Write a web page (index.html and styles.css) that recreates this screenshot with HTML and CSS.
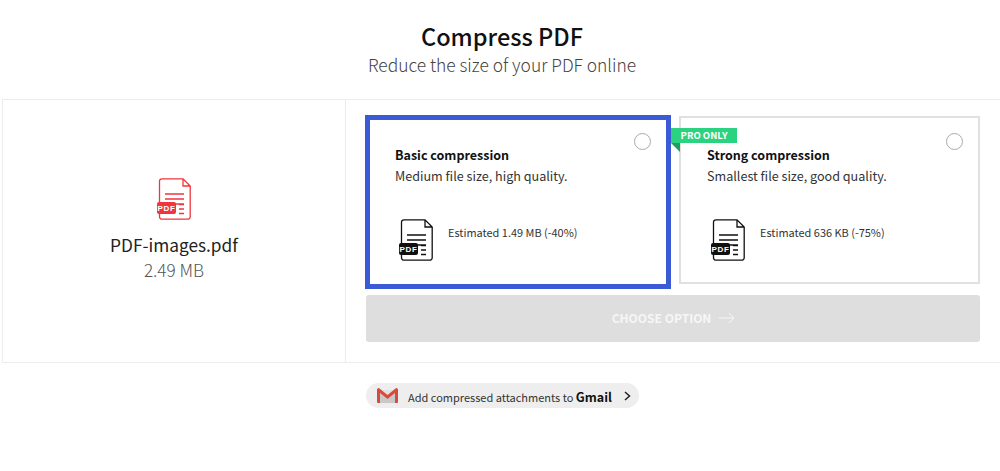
FILE: index.html
```html
<!DOCTYPE html>
<html lang="en">
<head>
    <meta charset="UTF-8">
    <title>Compress PDF</title>
    <link rel="stylesheet" href="styles.css">
</head>
<body>
    <header>
        <h1>Compress PDF</h1>
        <p>Reduce the size of your PDF online</p>
    </header>

    <div class="panel">
        <div class="fileCol">
            <svg class="fileIcon" viewBox="0 0 34 42">
                <path d="M5 .8h21L33.200 8V38.700a2.500 2.500 0 0 1-2.500 2.500H5a2.500 2.500 0 0 1-2.500-2.500V3.300A2.500 2.500 0 0 1 5 .8zM26 1V8h7" fill="#fff" stroke="currentColor" stroke-width="1.300"/>
                <path d="M8 16h19M8 21h19M8 26h19M22 26.500h5M22 31h5M22 35.500h5" fill="none" stroke="currentColor" stroke-width="1.300"/>
                <rect x="0" y="24" width="19" height="12" rx="2" fill="currentColor"/>
                <text x="9.500" y="33" class="pdfTag" text-anchor="middle">PDF</text>
            </svg>
            <div class="fileName">PDF-images.pdf</div>
            <div class="fileSize">2.49 MB</div>
        </div>
        <div class="optionsCol">
            <div class="options">
                <div class="card selected">
                    <span class="radio"></span>
                    <h3>Basic compression</h3>
                    <p>Medium file size, high quality.</p>
                    <div class="estimate">
                        <svg class="docIcon" viewBox="0 0 34 42">
                            <path d="M5 .8h21L33.200 8V38.700a2.500 2.500 0 0 1-2.500 2.500H5a2.500 2.500 0 0 1-2.500-2.500V3.300A2.500 2.500 0 0 1 5 .8zM26 1V8h7" fill="#fff" stroke="currentColor" stroke-width="1.300"/>
                            <path d="M8 16h19M8 21h19M8 26h19M22 26.500h5M22 31h5M22 35.500h5" fill="none" stroke="currentColor" stroke-width="1.300"/>
                            <rect x="0" y="24" width="19" height="12" rx="2" fill="currentColor"/>
                            <text x="9.500" y="33" class="pdfTag" text-anchor="middle">PDF</text>
                        </svg>
                        <span>Estimated 1.49 MB (-40%)</span>
                    </div>
                </div>
                <div class="card">
                    <span class="proBadge">PRO ONLY</span>
                    <span class="radio"></span>
                    <h3>Strong compression</h3>
                    <p>Smallest file size, good quality.</p>
                    <div class="estimate">
                        <svg class="docIcon" viewBox="0 0 34 42">
                            <path d="M5 .8h21L33.200 8V38.700a2.500 2.500 0 0 1-2.500 2.500H5a2.500 2.500 0 0 1-2.500-2.500V3.300A2.500 2.500 0 0 1 5 .8zM26 1V8h7" fill="#fff" stroke="currentColor" stroke-width="1.300"/>
                            <path d="M8 16h19M8 21h19M8 26h19M22 26.500h5M22 31h5M22 35.500h5" fill="none" stroke="currentColor" stroke-width="1.300"/>
                            <rect x="0" y="24" width="19" height="12" rx="2" fill="currentColor"/>
                            <text x="9.500" y="33" class="pdfTag" text-anchor="middle">PDF</text>
                        </svg>
                        <span>Estimated 636 KB (-75%)</span>
                    </div>
                </div>
            </div>
            <button class="chooseBtn">CHOOSE OPTION
                <svg width="16" height="12" viewBox="0 0 16 12"><path d="M0 6h15M10 1l5 5-5 5" fill="none" stroke="#f6f6f6" stroke-width="1"/></svg>
            </button>
        </div>
    </div>

    <div class="gmailRow">
        <a class="gmailPill">
            <svg width="21" height="15" viewBox="0 0 21 15">
                <path d="M3 2h15v13H3z" fill="#e2e2e2"/>
                <path d="M3 5l7.500 6L18 5v10H3z" fill="#c8c8c8"/>
                <path d="M0 1.500A1.500 1.500 0 0 1 2.500.5L10.500 7l8-6.500A1.500 1.500 0 0 1 21 1.500V14a1 1 0 0 1-1 1h-2V5l-7.500 6L3 5v10H1a1 1 0 0 1-1-1z" fill="#d54c3f"/>
            </svg>
            <span>Add compressed attachments to <b>Gmail</b></span>
            <svg class="chevron" width="7" height="10" viewBox="0 0 7 10"><path d="M1 1l4.500 4L1 9" fill="none" stroke="#222" stroke-width="1.500"/></svg>
        </a>
    </div>
</body>
</html>
```

FILE: styles.css
```css
body {
    margin: 0;
    padding: 0;
    background: #fff;
    color: #111;
    font-family: "Noto Sans CJK SC", "Noto Sans", sans-serif;
    overflow: hidden;
}

.pdfTag {
    font-family: "Liberation Sans", sans-serif;
    font-size: 8px;
    font-weight: bold;
    letter-spacing: 0.7px;
    fill: #fff;
}

header {
    text-align: center;
    padding: 20px 0 0 4px;
    height: 77px;
    box-sizing: border-box;
}

header h1 {
    margin: 0 0 1px;
    font-size: 23.500px;
    line-height: 32px;
    font-weight: 500;
    color: #111;
}

header p {
    margin: 0;
    font-size: 17.400px;
    line-height: 24px;
    font-weight: 300;
    color: #444;
}

.panel {
    display: flex;
    margin: 22px 0 0 2px;
    height: 264px;
    box-sizing: border-box;
    border: 1px solid #ececec;
    border-right: none;
}

.fileCol {
    width: 343px;
    box-sizing: border-box;
    border-right: 1px solid #ececec;
    text-align: center;
    padding-top: 78px;
}

.fileIcon {
    display: block;
    width: 34px;
    height: 42px;
    margin: 0 auto 12px;
    color: #f0353b;
}

.fileName {
    font-size: 17.300px;
    line-height: 26px;
    font-weight: 400;
    color: #222;
}

.fileSize {
    font-size: 17.200px;
    line-height: 24px;
    font-weight: 300;
    color: #555;
}

.optionsCol {
    width: 634px;
    padding: 16px 0 0 20px;
    box-sizing: border-box;
}

.options {
    display: flex;
    align-items: flex-start;
    gap: 8px;
}

.card {
    position: relative;
    width: 301px;
    height: 168px;
    box-sizing: border-box;
    border: 2px solid #e0e0e0;
    padding: 27px 0 0 26px;
}

.card.selected {
    width: 306px;
    height: 174px;
    margin: -1px 0 0 -1px;
    border: 5px solid #3b5bd6;
    padding: 25px 0 0 25px;
}

.card h3 {
    margin: 0;
    font-size: 12.500px;
    line-height: 20px;
    font-weight: 700;
    color: #111;
}

.card p {
    margin: 1px 0 0;
    font-size: 12.600px;
    line-height: 20px;
    font-weight: 400;
    color: #333;
}

.radio {
    position: absolute;
    top: 15px;
    right: 15px;
    width: 15px;
    height: 15px;
    border: 1px solid #aaa;
    border-radius: 50%;
}

.card.selected .radio {
    top: 13px;
    right: 15px;
}

.proBadge {
    position: absolute;
    top: 10px;
    left: -10px;
    width: 66px;
    height: 15px;
    background: #2bd27f;
    color: #fff;
    font-size: 9.500px;
    line-height: 15px;
    font-weight: 700;
    text-align: center;
}

.proBadge::after {
    content: "";
    position: absolute;
    top: 15px;
    left: 0;
    border-top: 9px solid #1f9e5f;
    border-left: 9px solid transparent;
}

.estimate {
    display: flex;
    align-items: flex-start;
    gap: 15px;
    margin: 33px 0 0 4px;
    font-size: 10.950px;
    line-height: 16px;
    font-weight: 400;
    color: #333;
}

.estimate span {
    margin-top: 5px;
}

.docIcon {
    width: 34px;
    height: 42px;
    color: #111;
    flex: none;
}

.chooseBtn {
    display: flex;
    align-items: center;
    justify-content: center;
    gap: 8px;
    width: 614px;
    height: 47px;
    margin-top: 6px;
    padding: 0 0 2px 1px;
    border: none;
    border-radius: 3px;
    background: #dedede;
    color: #f6f6f6;
    font-family: inherit;
    font-size: 12px;
    font-weight: 700;
}

.gmailRow {
    margin: 20px 0 0 366px;
}

.gmailPill {
    display: flex;
    align-items: center;
    width: 273px;
    height: 25px;
    box-sizing: border-box;
    padding: 0 8px 0 11px;
    border-radius: 13px;
    background: #eee;
    font-size: 11px;
    font-weight: 400;
    color: #333;
}

.gmailPill span {
    margin-left: 10px;
    padding-top: 1px;
    white-space: nowrap;
}

.gmailPill b {
    font-size: 12.500px;
    font-weight: 700;
    color: #111;
}

.chevron {
    margin-left: auto;
}
```
